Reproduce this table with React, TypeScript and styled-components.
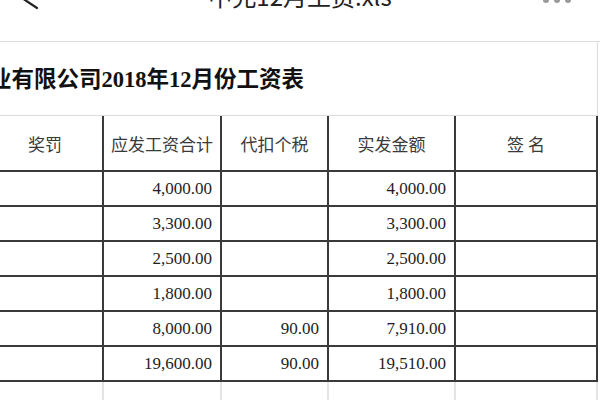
import React from "react";
import styled, { createGlobalStyle } from "styled-components";

const Global = createGlobalStyle`
  html, body { margin: 0; padding: 0; background: #fff; }
  body { width: 600px; height: 400px; overflow: hidden; font-family: "Noto Sans CJK SC", "Noto Sans", sans-serif; }
`;

const Page = styled.div`
  width: 600px;
  height: 400px;
  overflow: hidden;
  background: #fff;
`;

const NavBar = styled.div`
  height: 41px;
  display: grid;
  grid-template-columns: 100px 1fr 100px;
  align-items: start;
  border-bottom: 1px solid #dcdcdc;
  overflow: hidden;
`;

const BackIcon = styled.svg`
  margin-top: -18px;
  margin-left: 16px;
`;

const NavTitle = styled.div`
  margin-top: -16px;
  text-align: center;
  font-family: "Noto Sans CJK SC", sans-serif;
  font-size: 24px;
  line-height: 24px;
  color: #222;
  white-space: nowrap;
`;

const MoreIcon = styled.svg`
  justify-self: end;
  margin-top: -4px;
  margin-right: 28px;
`;

const Sheet = styled.div`
  margin-left: -12px;
  width: 610px;
`;

const TitleCell = styled.div`
  height: 74px;
  box-sizing: border-box;
  display: flex;
  align-items: center;
  padding-left: 1px;
  padding-bottom: 4px;
  border-right: 1px solid #dcdcdc;
  border-bottom: 1px solid #dcdcdc;
  font-family: "Liberation Serif", "Noto Sans CJK SC", serif;
  font-weight: 700;
  font-size: 22.5px;
  color: #111;
  white-space: nowrap;
  overflow: hidden;
`;

const Row = styled.div<{ $h: number }>`
  display: grid;
  grid-template-columns: 116px 118px 107px 127px 142px;
  height: ${(p) => p.$h}px;
`;

const Cell = styled.div<{ $faint?: boolean; $head?: boolean }>`
  box-sizing: border-box;
  display: flex;
  align-items: center;
  justify-content: ${(p) => (p.$head ? "center" : "flex-end")};
  padding-right: ${(p) => (p.$head ? 0 : 8)}px;
  border-right: 2px solid ${(p) => (p.$faint ? "#e4e4e4" : "#3a3a3a")};
  border-bottom: ${(p) => (p.$faint ? "none" : "2px solid #3a3a3a")};
  font-family: ${(p) =>
    p.$head ? `"Noto Sans CJK SC", sans-serif` : `"Liberation Serif", serif`};
  font-size: 17px;
  color: ${(p) => (p.$head ? "#3a3a3a" : "#1e1e1e")};
  white-space: pre;
`;

const headers = ["奖罚", "应发工资合计", "代扣个税", "实发金额", "签 名"];
const rows: string[][] = [
  ["", "4,000.00", "", "4,000.00", ""],
  ["", "3,300.00", "", "3,300.00", ""],
  ["", "2,500.00", "", "2,500.00", ""],
  ["", "1,800.00", "", "1,800.00", ""],
  ["", "8,000.00", "90.00", "7,910.00", ""],
  ["", "19,600.00", "90.00", "19,510.00", ""],
];

export default function App() {
  return (
    <Page>
      <Global />
      <NavBar>
        <BackIcon width="24" height="28" viewBox="0 0 24 28">
          <path
            d="M21 2 L3 14 L21 26"
            fill="none"
            stroke="#222"
            strokeWidth="2.2"
            strokeLinecap="round"
            strokeLinejoin="round"
          />
        </BackIcon>
        <NavTitle>中允12月工资.xls</NavTitle>
        <MoreIcon width="30" height="8" viewBox="0 0 30 8">
          <circle cx="4" cy="4" r="3" fill="#9a9a9a" />
          <circle cx="15" cy="4" r="3" fill="#9a9a9a" />
          <circle cx="26" cy="4" r="3" fill="#9a9a9a" />
        </MoreIcon>
      </NavBar>
      <Sheet>
        <TitleCell>业有限公司2018年12月份工资表</TitleCell>
        <Row $h={56}>
          {headers.map((h, i) => (
            <Cell key={i} $head>
              {h}
            </Cell>
          ))}
        </Row>
        {rows.map((r, ri) => (
          <Row key={ri} $h={35}>
            {r.map((v, ci) => (
              <Cell key={ci}>{v}</Cell>
            ))}
          </Row>
        ))}
        <Row $h={30}>
          {headers.map((_, i) => (
            <Cell key={i} $faint />
          ))}
        </Row>
      </Sheet>
    </Page>
  );
}
